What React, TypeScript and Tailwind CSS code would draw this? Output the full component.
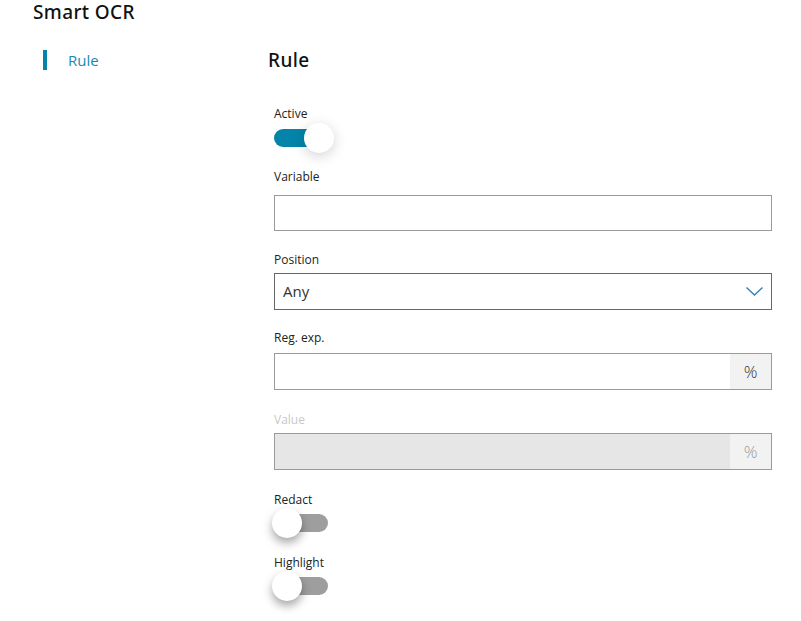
import { useState } from "react";

const heading = { fontFamily: '"Noto Sans", "Open Sans", sans-serif' };
const body = { fontFamily: '"Open Sans", "Noto Sans", sans-serif' };

function Toggle({ on, onChange }: { on: boolean; onChange: (v: boolean) => void }) {
  return (
    <button
      type="button"
      onClick={() => onChange(!on)}
      className="relative block h-[30px] w-[55px]"
      aria-pressed={on}
    >
      <span
        className={
          on
            ? "absolute left-0 top-[6px] h-[18px] w-[54px] rounded-full bg-[#0584a9]"
            : "absolute left-0 top-[6px] h-[18px] w-[54px] rounded-full bg-[#9e9e9e]"
        }
      />
      <span
        className={
          on
            ? "absolute left-[30px] top-0 h-[30px] w-[30px] rounded-full bg-white shadow-[0_3px_14px_rgba(0,0,0,0.18)]"
            : "absolute left-[-2px] top-0 h-[30px] w-[30px] rounded-full bg-white shadow-[0_5px_10px_rgba(0,0,0,0.35)]"
        }
      />
    </button>
  );
}

function Label({ children, className }: { children: string; className?: string }) {
  return (
    <div className={"text-xs leading-5 text-[#222] " + (className ?? "")} style={body}>
      {children}
    </div>
  );
}

export default function App() {
  const [active, setActive] = useState(true);
  const [redact, setRedact] = useState(false);
  const [highlight, setHighlight] = useState(false);

  return (
    <div className="h-[621px] w-[801px] overflow-hidden bg-white">
      <h1
        className="pl-[33px] text-[19px] font-medium leading-6 tracking-[0.02em] text-[#111]"
        style={heading}
      >
        Smart OCR
      </h1>

      <div className="mt-[24px] flex">
        <nav className="w-[268px] shrink-0 pl-[43px]">
          <div className="flex h-6 items-center">
            <span className="h-[20px] w-[4px] bg-[#0584a9]" />
            <span className="ml-[21px] text-[15px] text-[#1a89b4]" style={body}>
              Rule
            </span>
          </div>
        </nav>

        <main className="flex-1 pr-[29px]">
          <h2
            className="text-[19px] font-medium leading-6 tracking-[0.02em] text-[#111]"
            style={heading}
          >
            Rule
          </h2>

          <div className="mt-[32px] pl-[6px]">
            <Label>Active</Label>
            <div className="mt-[-1px]">
              <Toggle on={active} onChange={setActive} />
            </div>

            <Label className="mt-[14px]">Variable</Label>
            <input
              className="mt-[8px] block h-[36px] w-full border border-[#9a9a9a] px-2 text-[15px] outline-none"
              style={body}
            />

            <Label className="mt-[19px]">Position</Label>
            <div
              className="mt-[3px] flex h-[37px] w-full items-center justify-between border border-[#666] pl-[8px] pr-[8px] text-[15px] text-[#333]"
              style={body}
            >
              <span>Any</span>
              <svg width="17" height="9" viewBox="0 0 17 9" fill="none">
                <path d="M0.5 0.5L8.5 8L16.5 0.5" stroke="#2a7fc0" strokeWidth="1.3" />
              </svg>
            </div>

            <Label className="mt-[18px]">Reg. exp.</Label>
            <div className="mt-[5px] flex h-[37px] w-full border border-[#9a9a9a]">
              <input className="min-w-0 flex-1 px-2 text-[15px] outline-none" style={body} />
              <span
                className="flex w-[41px] items-center justify-center bg-[#f2f2f2] text-[17px] font-light text-[#333]"
                style={body}
              >
                %
              </span>
            </div>

            <Label className="mt-[20px] !text-[#c8c8c8]">Value</Label>
            <div className="mt-[3px] flex h-[37px] w-full border border-[#9a9a9a] bg-[#e6e6e6]">
              <div className="flex-1" />
              <span
                className="flex w-[41px] items-center justify-center bg-[#f2f2f2] text-[17px] font-light text-[#999]"
                style={body}
              >
                %
              </span>
            </div>

            <Label className="mt-[20px]">Redact</Label>
            <div className="mt-[-2px]">
              <Toggle on={redact} onChange={setRedact} />
            </div>

            <Label className="mt-[15px]">Highlight</Label>
            <div className="mt-[-2px]">
              <Toggle on={highlight} onChange={setHighlight} />
            </div>
          </div>
        </main>
      </div>
    </div>
  );
}
